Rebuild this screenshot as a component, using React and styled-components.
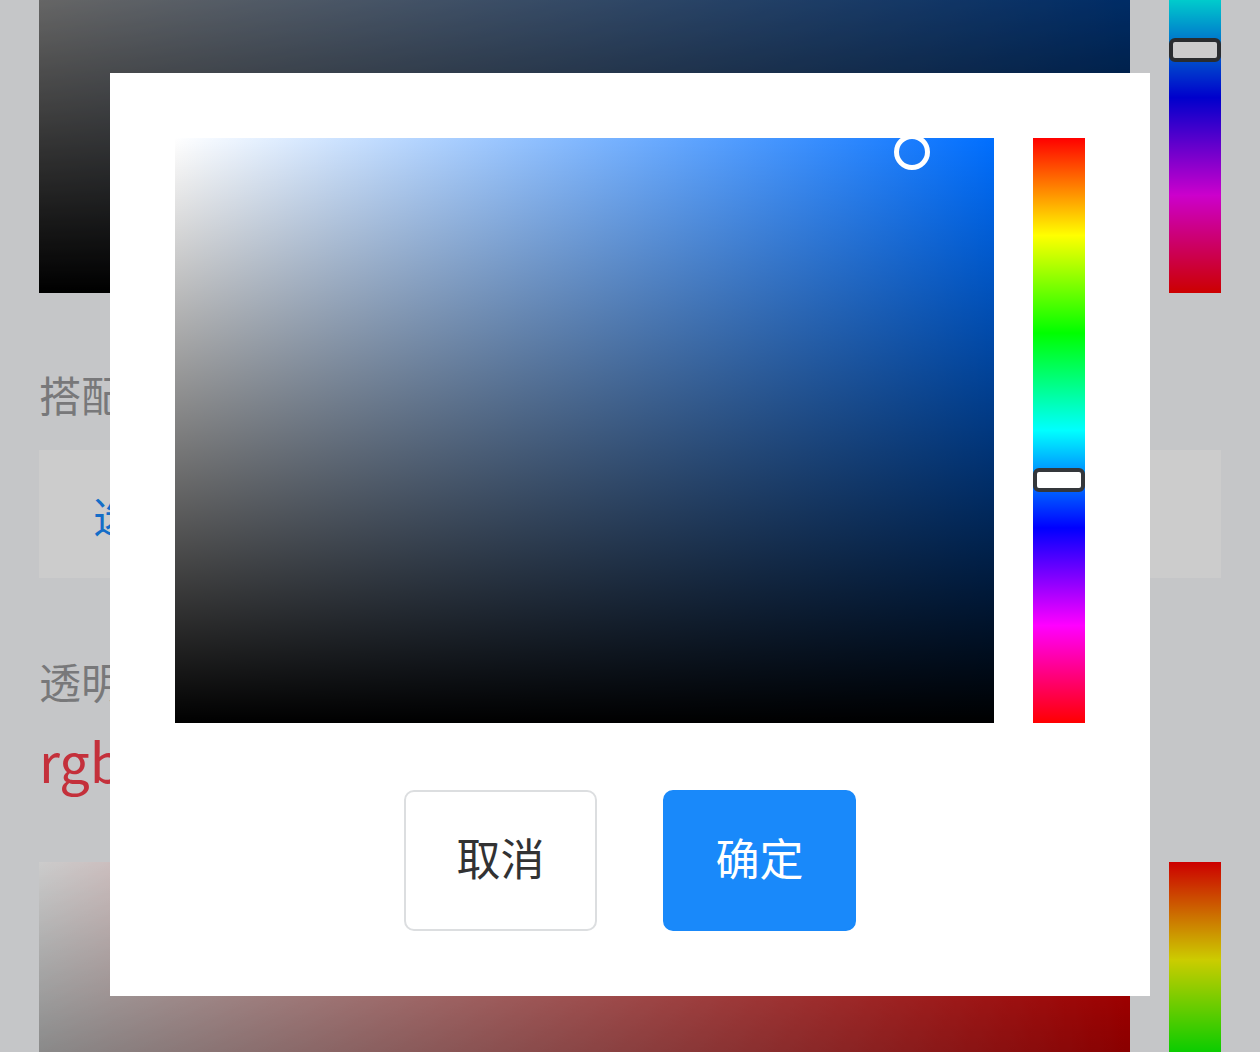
import React from "react";
import styled, { createGlobalStyle } from "styled-components";

const GlobalStyle = createGlobalStyle`
  html, body {
    margin: 0;
    padding: 0;
    overflow: hidden;
    background: #f7f8fa;
    font-family: "Noto Sans CJK SC", "Noto Sans", sans-serif;
  }
`;

const HUE_GRADIENT = `linear-gradient(
  to bottom,
  #ff0000 0%,
  #ffff00 16.66%,
  #00ff00 33.33%,
  #00ffff 50%,
  #0000ff 66.66%,
  #ff00ff 83.33%,
  #ff0000 100%
)`;

const ColorPicker = ({ hue, hueTop, cursor, width, height, gap, barWidth }) => (
  <PickerRow $gap={gap}>
    <SatArea $hue={hue} $width={width} $height={height}>
      {cursor && (
        <Cursor style={{ left: cursor.x, top: cursor.y }} />
      )}
    </SatArea>
    <HueBar $width={barWidth} $height={height}>
      <HueThumb style={{ top: hueTop }} />
    </HueBar>
  </PickerRow>
);

const App = () => {
  return (
    <>
      <GlobalStyle />
      <Page>
        <ColorPicker
          hue={214}
          hueTop={331}
          cursor={{ x: 982, y: 14 }}
          height={586}
          gap={39}
          barWidth={52}
        />
        <Label>搭配颜色</Label>
        <SelectBox>
          <SelectText>选择搭配颜色</SelectText>
        </SelectBox>
        <Label>透明度颜色</Label>
        <RgbText>rgba(238, 10, 36, 0.6)</RgbText>
        <Spacer />
        <ColorPicker hue={0} hueTop={562} height={586} gap={39} barWidth={52} />
      </Page>

      <Overlay>
        <Modal>
          <ColorPicker
            hue={214}
            hueTop={330}
            cursor={{ x: 737, y: 14 }}
            width={819}
            height={585}
            gap={39}
            barWidth={52}
          />
          <ButtonRow>
            <Button>取消</Button>
            <Button $primary>确定</Button>
          </ButtonRow>
        </Modal>
      </Overlay>
    </>
  );
};

export default App;

// Page behind the dialog (scrolled down a bit)
const Page = styled.div`
  margin-top: -293px;
  padding: 0 39px;
`;

const PickerRow = styled.div`
  display: flex;
  gap: ${(p) => p.$gap}px;
`;

const SatArea = styled.div`
  position: relative;
  flex: ${(p) => (p.$width ? "none" : "1")};
  width: ${(p) => (p.$width ? `${p.$width}px` : "auto")};
  height: ${(p) => p.$height}px;
  background: linear-gradient(to top, #000 0%, rgba(0, 0, 0, 0) 100%),
    linear-gradient(to right, #fff 0%, hsl(${(p) => p.$hue}, 100%, 50%) 100%);
`;

const Cursor = styled.div`
  position: absolute;
  width: 36px;
  height: 36px;
  box-sizing: border-box;
  border: 5px solid #fff;
  border-radius: 50%;
  transform: translate(-50%, -50%);
`;

const HueBar = styled.div`
  position: relative;
  flex: none;
  width: ${(p) => p.$width}px;
  height: ${(p) => p.$height}px;
  background: ${HUE_GRADIENT};
`;

const HueThumb = styled.div`
  position: absolute;
  left: 0;
  right: 0;
  height: 24px;
  box-sizing: border-box;
  border: 4px solid #34373b;
  border-radius: 6px;
  background: #fff;
`;

const Label = styled.div`
  margin-top: 72px;
  font-size: 42px;
  line-height: 58px;
  color: #969799;

  & + & {
    margin-top: 0;
  }
`;

const SelectBox = styled.div`
  display: flex;
  align-items: center;
  height: 128px;
  margin: 27px 0 74px;
  padding-left: 54px;
  background: #fff;

  & + ${Label} {
    margin-top: 0;
  }
`;

const SelectText = styled.span`
  font-size: 42px;
  color: #1989fa;
`;

const RgbText = styled.div`
  margin-top: 15px;
  font-size: 54px;
  line-height: 70px;
  color: #f53c4a;
  white-space: nowrap;
`;

const Spacer = styled.div`
  height: 67px;
`;

// Dialog
const Overlay = styled.div`
  position: fixed;
  inset: 0;
  display: flex;
  justify-content: center;
  align-items: flex-start;
  padding-top: 73px;
  background: rgba(0, 0, 0, 0.2);
`;

const Modal = styled.div`
  display: flex;
  flex-direction: column;
  padding: 65px;
  background: #fff;
`;

const ButtonRow = styled.div`
  display: flex;
  justify-content: center;
  gap: 66px;
  margin-top: 67px;
`;

const Button = styled.button`
  width: 193px;
  height: 141px;
  box-sizing: border-box;
  border: 2px solid ${(p) => (p.$primary ? "#1989fa" : "#dcdee0")};
  border-radius: 10px;
  background: ${(p) => (p.$primary ? "#1989fa" : "#fff")};
  color: ${(p) => (p.$primary ? "#fff" : "#323233")};
  font-family: "Noto Sans CJK SC", sans-serif;
  font-size: 44px;
  padding: 0 0 8px;
  cursor: pointer;
`;
